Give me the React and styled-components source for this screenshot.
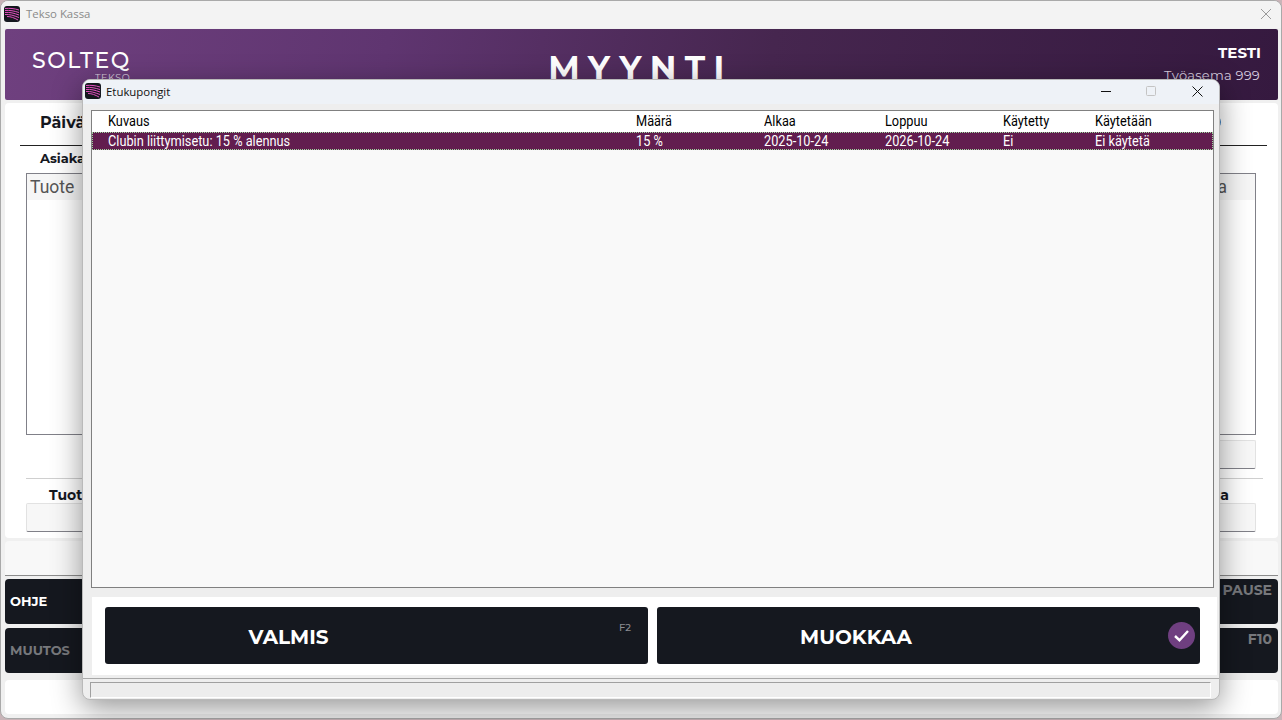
import React from 'react'
import styled, { createGlobalStyle } from 'styled-components'

const GlobalStyle = createGlobalStyle`
  html, body {
    margin: 0;
    padding: 0;
    width: 1282px;
    height: 720px;
    overflow: hidden;
    background: #c9b4b8;
    font-family: "Liberation Sans", Arial, sans-serif;
  }
  * {
    box-sizing: border-box;
  }
`

const Desktop = styled.div`
  position: relative;
  width: 1282px;
  height: 720px;
  overflow: hidden;
`
const MainWindow = styled.div`
  width: 1282px;
  height: 719px;
  display: flex;
  flex-direction: column;
  background: #f0f0f0;
  border: 1px solid #a9a9a9;
  border-radius: 8px;
  overflow: hidden;
`
const TitleBar = styled.div`
  flex: 0 0 ${p => p.$height}px;
  display: flex;
  align-items: center;
  gap: ${p => p.$gap}px;
  padding: 0 ${p => p.$right}px 2px ${p => p.$left}px;
  background: ${p => p.$bg};
  color: ${p => p.$color};
  font-family: "Open Sans", sans-serif;
  font-size: 11.4px;
`
const TitleText = styled.span`
  flex: 1 1 auto;
`
const MainContent = styled.div`
  flex: 1 1 auto;
  display: flex;
  flex-direction: column;
  padding: 1px 3px 4px 4px;
`
const Banner = styled.header`
  flex: 0 0 71px;
  display: flex;
  justify-content: space-between;
  background: linear-gradient(100deg, #6f407f 0%, #5f3570 30%, #46264f 60%, #35193f 100%);
  color: #fff;
  border-radius: 2px;
  font-family: Montserrat, Inter, sans-serif;
`
const Logo = styled.div`
  width: 200px;
  padding: 20px 0 0 27px;
  display: flex;
  flex-direction: column;
`
const LogoWord = styled.span`
  font-size: 22px;
  line-height: 24px;
  letter-spacing: 1.5px;
  font-weight: 500;
`
const LogoSub = styled.span`
  align-self: flex-start;
  margin-left: 63px;
  font-size: 9.5px;
  line-height: 10px;
  letter-spacing: 0.6px;
  opacity: 0.75;
`
const BannerTitle = styled.div`
  flex: 1 1 auto;
  text-align: center;
  padding: 18px 2px 0 0;
  font-size: 33px;
  line-height: 40px;
  font-weight: 700;
  letter-spacing: 8.4px;
`
const Station = styled.div`
  width: 200px;
  padding: 15px 17px 0 0;
  text-align: right;
`
const StationName = styled.div`
  font-size: 15px;
  line-height: 18px;
  font-weight: 700;
`
const StationSub = styled.div`
  margin-top: 4px;
  padding-right: 1px;
  font-size: 13px;
  line-height: 18px;
  letter-spacing: 0.25px;
  color: #d9cfe0;
`
const SalesCard = styled.section`
  flex: 0 0 435px;
  margin-top: 3px;
  display: flex;
  flex-direction: column;
  padding: 0 11px 0 15px;
  background: #fff;
  border-radius: 4px;
`
const DateRow = styled.div`
  flex: 0 0 43px;
  display: flex;
  align-items: center;
  justify-content: space-between;
  padding: 0 46px 4px 20px;
  border-bottom: 1px solid #222;
  font-family: Montserrat, Inter, sans-serif;
  font-size: 16px;
  font-weight: 700;
  color: #15181f;
`
const InfoDot = styled.span`
  width: 14px;
  height: 14px;
  border-radius: 50%;
  background: #3b7fc0;
`
const CustomerRow = styled.div`
  flex: 0 0 24px;
  margin-bottom: 3px;
  display: flex;
  align-items: center;
  padding-left: 20px;
  font-family: Montserrat, Inter, sans-serif;
  font-size: 13px;
  font-weight: 700;
  color: #15181f;
`
const ProductTable = styled.div`
  flex: 0 0 262px;
  margin: 0 11px 0 6px;
  border: 1px solid #808088;
  background: #fff;
`
const ProductHead = styled.div`
  display: flex;
  justify-content: space-between;
  padding: 0 28px 0 3px;
  height: 26px;
  line-height: 26px;
  background: #f6f6f6;
  font-family: Roboto, sans-serif;
  font-size: 17.5px;
  color: #555;
`
const FieldBox = styled.div`
  border: 1px solid #e2e2e2;
  border-bottom-color: #808088;
  border-radius: 2px;
  background: #f7f7f7;
`
const TotalBox = styled(FieldBox)`
  flex: 0 0 29px;
  align-self: flex-end;
  width: 300px;
  margin: 5px 11px 0 0;
`
const TotalsRow = styled.div`
  flex: 0 0 54px;
  margin: 9px 4px 0 6px;
  border-top: 1px solid #cfcfcf;
  display: flex;
  flex-direction: column;
`
const TotalsHead = styled.div`
  display: flex;
  justify-content: space-between;
  height: 24px;
  padding: 0 34px 0 23px;
  line-height: 32px;
  font-family: Montserrat, Inter, sans-serif;
  font-size: 14px;
  font-weight: 700;
  color: #15181f;
`
const TotalsBox = styled(FieldBox)`
  height: 29px;
  margin-right: 7px;
`
const Strip = styled.div`
  flex: 0 0 35px;
  margin-top: 3px;
  background: #f8f8f8;
  border-bottom: 1px solid #8c8c8c;
  border-radius: 4px 4px 0 0;
`
const FunctionRow = styled.div`
  flex: 0 0 45px;
  margin-top: ${p => p.$top}px;
  display: flex;
  justify-content: space-between;
  padding: 0 6px 0 5px;
  background: #15181f;
  border-radius: 4px;
  font-family: Montserrat, Inter, sans-serif;
  font-weight: 700;
`
const FunctionLabel = styled.span`
  align-self: ${p => (p.$top ? 'flex-start' : 'center')};
  margin: ${p => (p.$top ? '2px 0 0' : '0 0 2px')};
  font-size: ${p => (p.$top ? 14 : 13)}px;
  color: ${p => (p.$dim ? '#77787c' : '#fff')};
`
const BottomCard = styled.div`
  flex: 0 0 34px;
  margin-top: 7px;
  background: #fff;
  border-radius: 4px;
`

const Dialog = styled.div`
  position: absolute;
  left: 82px;
  top: 79px;
  width: 1138px;
  height: 621px;
  display: flex;
  flex-direction: column;
  background: #eeeeee;
  border: 1px solid #b9b9b9;
  border-radius: 8px;
  box-shadow: 0 8px 30px rgba(0, 0, 0, 0.42);
  overflow: hidden;
`
const WindowButtons = styled.div`
  display: flex;
  align-items: center;
`
const WindowButton = styled.button`
  width: 45px;
  height: 22px;
  padding: 0 2px 0 0;
  border: 0;
  background: transparent;
  display: flex;
  align-items: center;
  justify-content: center;

  &:last-child {
    padding: 0 0 0 1px;
  }
`
const Coupons = styled.div`
  flex: 0 0 478px;
  margin: 6px 5px 0 8px;
  background: #f9f9f9;
  border: 1px solid #808080;
  font-family: Roboto, sans-serif;
  font-size: 15px;
`
const CouponRow = styled.div`
  display: grid;
  grid-template-columns: 528px 128px 121px 118px 92px 1fr;
  height: ${p => (p.$selected ? 18 : 21)}px;
  padding: 0 0 ${p => (p.$selected ? 0 : 2)}px 16px;
  align-items: center;
  background: ${p => (p.$selected ? '#621d4f' : '#fff')};
  color: ${p => (p.$selected ? '#fff' : '#000')};
  outline: ${p => (p.$selected ? '1px dotted #9fd8a0' : 'none')};
  outline-offset: -1px;
`
const Cell = styled.span`
  display: inline-block;
  white-space: nowrap;
  transform: scaleX(0.85);
  transform-origin: left center;
`
const ActionPanel = styled.div`
  flex: 0 0 78px;
  margin: 9px 2px 0 9px;
  padding: 10px 17px 11px 13px;
  display: flex;
  gap: 9px;
  background: #fff;
`
const ActionButton = styled.button`
  position: relative;
  flex: 0 0 543px;
  border: 0;
  border-radius: 3px;
  background: #15181f;
  color: #fff;
  padding: 2px ${p => p.$inset}px 0 0;
  font-family: Montserrat, Inter, sans-serif;
  font-size: 20px;
  font-weight: 700;
`
const KeyHint = styled.span`
  position: absolute;
  top: 14px;
  right: 17px;
  font-size: 10px;
  font-weight: 500;
  color: #8b8c90;
`
const CheckBadge = styled.span`
  position: absolute;
  top: 15px;
  right: 5px;
  width: 27px;
  height: 27px;
  border-radius: 50%;
  background: #6f3f80;
  display: flex;
  align-items: center;
  justify-content: center;
`
const StatusBar = styled.div`
  flex: 0 0 21px;
  margin-top: 3px;
  border-top: 1px solid #a8a8a8;
  padding: 3px 8px 3px 7px;
`
const StatusField = styled.div`
  height: 16px;
  border: 1px solid;
  border-color: #a0a0a0 #fff #fff #a0a0a0;
  background: #ededed;
`

function AppIcon() {
  return (
    <svg width="16" height="16" viewBox="0 0 16 16">
      <rect width="16" height="16" rx="3" fill="#15181f" />
      <g fill="none" stroke="#e44fc0" strokeWidth="1">
        <path d="M1 2.5 C6 2 10 2.5 15 4" />
        <path d="M1 4.5 C6 4 10 5 15 6.5" />
        <path d="M1 6.5 C6 6 10 7.2 15 9" />
        <path d="M1 8.5 C6 8.2 9.5 9.5 15 11.5" />
        <path d="M3 10.5 C7 10.5 10 11.8 14 14" />
      </g>
    </svg>
  )
}

const coupons = ['Clubin liittymisetu: 15 % alennus', '15 %', '2025-10-24', '2026-10-24', 'Ei', 'Ei käytetä']
const columns = ['Kuvaus', 'Määrä', 'Alkaa', 'Loppuu', 'Käytetty', 'Käytetään']

export default function App() {
  return (
    <Desktop>
      <GlobalStyle />
      <MainWindow>
        <TitleBar $height={27} $gap={6} $left={3} $right={9} $bg="#f3f3f3" $color="#8a8a8a">
          <AppIcon />
          <TitleText>Tekso Kassa</TitleText>
          <svg width="12" height="12" viewBox="0 0 12 12">
            <path d="M1 1 L11 11 M11 1 L1 11" stroke="#9a9a9a" strokeWidth="1" />
          </svg>
        </TitleBar>
        <MainContent>
          <Banner>
            <Logo>
              <LogoWord>SOLTEQ</LogoWord>
              <LogoSub>TEKSO</LogoSub>
            </Logo>
            <BannerTitle>MYYNTI</BannerTitle>
            <Station>
              <StationName>TESTI</StationName>
              <StationSub>Työasema 999</StationSub>
            </Station>
          </Banner>
          <SalesCard>
            <DateRow>
              <span>Päivä</span>
              <InfoDot />
            </DateRow>
            <CustomerRow>Asiakas</CustomerRow>
            <ProductTable>
              <ProductHead>
                <span>Tuote</span>
                <span>Summa</span>
              </ProductHead>
            </ProductTable>
            <TotalBox />
            <TotalsRow>
              <TotalsHead>
                <span>Tuotteet</span>
                <span>Summa</span>
              </TotalsHead>
              <TotalsBox />
            </TotalsRow>
          </SalesCard>
          <Strip />
          <FunctionRow $top={3}>
            <FunctionLabel>OHJE</FunctionLabel>
            <FunctionLabel $dim $top>PAUSE</FunctionLabel>
          </FunctionRow>
          <FunctionRow $top={4}>
            <FunctionLabel $dim>MUUTOS</FunctionLabel>
            <FunctionLabel $dim $top>F10</FunctionLabel>
          </FunctionRow>
          <BottomCard />
        </MainContent>
      </MainWindow>
      <Dialog>
        <TitleBar $height={24} $gap={5} $left={2} $right={0} $bg="#eef2f7" $color="#111">
          <AppIcon />
          <TitleText>Etukupongit</TitleText>
          <WindowButtons>
            <WindowButton>
              <svg width="10" height="10" viewBox="0 0 10 10"><path d="M0 5.5 H10" stroke="#111" /></svg>
            </WindowButton>
            <WindowButton>
              <svg width="10" height="10" viewBox="0 0 10 10"><rect x="0.5" y="0.5" width="9" height="9" rx="1" fill="none" stroke="#c4c4c4" /></svg>
            </WindowButton>
            <WindowButton>
              <svg width="11" height="11" viewBox="0 0 11 11"><path d="M0.5 0.5 L10.5 10.5 M10.5 0.5 L0.5 10.5" stroke="#111" /></svg>
            </WindowButton>
          </WindowButtons>
        </TitleBar>
        <Coupons>
          <CouponRow>
            {columns.map(c => <Cell key={c}>{c}</Cell>)}
          </CouponRow>
          <CouponRow $selected>
            {coupons.map(c => <Cell key={c}>{c}</Cell>)}
          </CouponRow>
        </Coupons>
        <ActionPanel>
          <ActionButton $inset={176}>
            VALMIS
            <KeyHint>F2</KeyHint>
          </ActionButton>
          <ActionButton $inset={145}>
            MUOKKAA
            <CheckBadge>
              <svg width="17" height="17" viewBox="0 0 17 17">
                <path d="M2 9 L6.5 13.2 L15 4" fill="none" stroke="#fff" strokeWidth="2.4" />
              </svg>
            </CheckBadge>
          </ActionButton>
        </ActionPanel>
        <StatusBar>
          <StatusField />
        </StatusBar>
      </Dialog>
    </Desktop>
  )
}
